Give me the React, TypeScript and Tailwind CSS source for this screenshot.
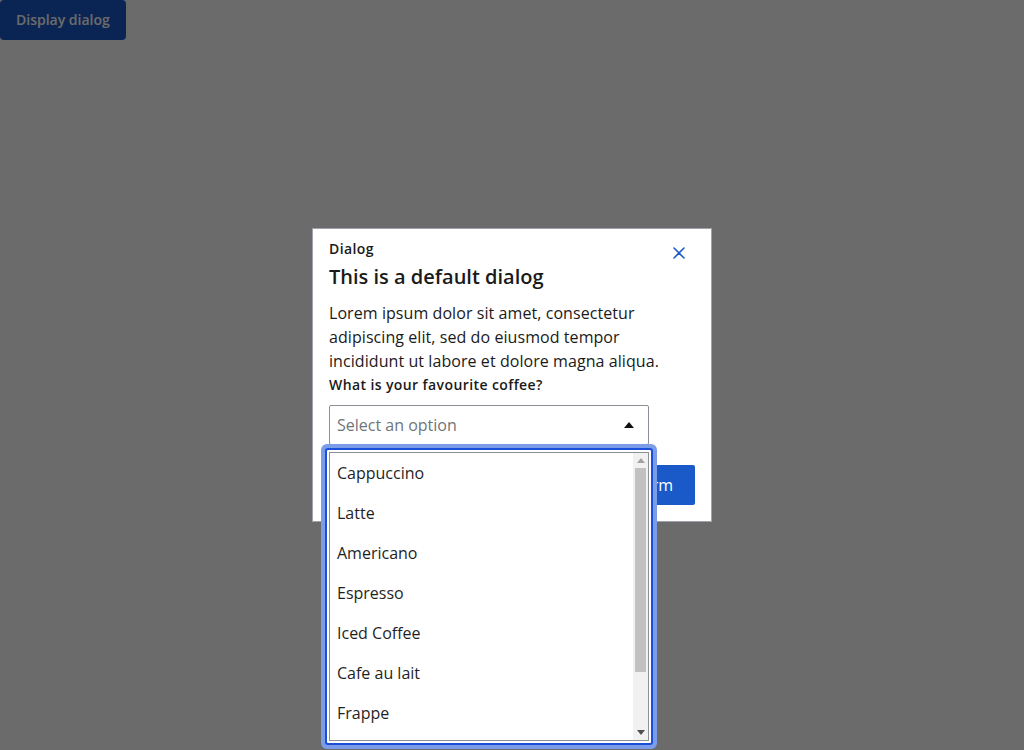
import React from 'react';

const coffees = ['Cappuccino', 'Latte', 'Americano', 'Espresso', 'Iced Coffee', 'Cafe au lait', 'Frappe'];

const CloseIcon: React.FC = () => (
  <svg width="12" height="12" viewBox="0 0 12 12" fill="none">
    <path d="M1 1L11 11M11 1L1 11" stroke="#1a5ac8" strokeWidth="1.6" strokeLinecap="round" />
  </svg>
);

const Scrollbar: React.FC = () => (
  <div className="absolute top-0 right-0 bottom-0 w-[15px] bg-[#f1f1f1] flex flex-col">
    <div className="h-[15px] flex items-center justify-center">
      <svg width="8" height="5" viewBox="0 0 8 5">
        <path d="M0 5L4 0L8 5Z" fill="#a3a3a3" />
      </svg>
    </div>
    <div className="h-[204px] mx-[2px] bg-[#c1c1c1]" />
    <div className="flex-1" />
    <div className="h-[15px] flex items-center justify-center">
      <svg width="8" height="5" viewBox="0 0 8 5">
        <path d="M0 0L8 0L4 5Z" fill="#505050" />
      </svg>
    </div>
  </div>
);

const Listbox: React.FC = () => (
  <div className="absolute left-[-8px] top-[39px] w-[336px] rounded-[6px] bg-[#7b9ce8] p-[4px] z-10">
    <div className="rounded-[3px] bg-[#1b4fd8] p-[2px]">
      <div className="bg-white p-[2px] rounded-[1px]">
        <div className="relative h-[289px] border border-[#8c9096] bg-white overflow-hidden">
          <ul>
            {coffees.map((c) => (
              <li key={c} className="h-10 flex items-center px-[7px] text-base text-[#1f1f1f]">
                {c}
              </li>
            ))}
          </ul>
          <Scrollbar />
        </div>
      </div>
    </div>
  </div>
);

const App: React.FC = () => {
  return (
    <div className="relative h-[750px] bg-white" style={{ fontFamily: '"Open Sans", "Noto Sans", sans-serif' }}>
      <button className="h-10 px-4 rounded-[4px] bg-[#1a5ac8] text-white text-sm font-semibold">
        Display dialog
      </button>

      <div className="fixed inset-0 bg-black/[0.58] flex items-center justify-center">
        <div className="w-[400px] bg-white border border-[#9ea3aa] px-4 pt-[10px] pb-4 text-[#1a1a1a]">
          <div className="h-5 flex items-start justify-between">
            <div className="text-sm font-semibold leading-5 tracking-[0.4px]">Dialog</div>
            <button className="w-8 h-5 mt-1 flex items-center justify-center">
              <CloseIcon />
            </button>
          </div>
          <h2 className="mt-1 text-xl font-semibold leading-7">This is a default dialog</h2>
          <p className="mt-[10px] text-base leading-6 tracking-[0.07px]">
            Lorem ipsum dolor sit amet, consectetur adipiscing elit, sed do eiusmod tempor incididunt ut labore et
            dolore magna aliqua.
          </p>
          <label className="block mt-[2px] text-sm font-semibold leading-5 tracking-[0.4px]">
            What is your favourite coffee?
          </label>
          <div className="relative mt-[10px] w-80">
            <div className="h-10 border border-[#8c9096] rounded-[2px] flex items-center justify-between pl-[7px] pr-[14px]">
              <span className="text-base text-[#6f757c]">Select an option</span>
              <svg width="10" height="6" viewBox="0 0 10 6">
                <path d="M0 6L5 0L10 6Z" fill="#111" />
              </svg>
            </div>
            <Listbox />
          </div>
          <div className="mt-5 flex justify-end gap-2">
            <button className="h-10 px-[22px] rounded-[2px] border border-[#1a5ac8] text-[#1a5ac8] text-base">
              Cancel
            </button>
            <button className="h-10 px-[22px] rounded-[2px] bg-[#1a5ac8] text-white text-base">Confirm</button>
          </div>
        </div>
      </div>
    </div>
  );
};

export default App;
